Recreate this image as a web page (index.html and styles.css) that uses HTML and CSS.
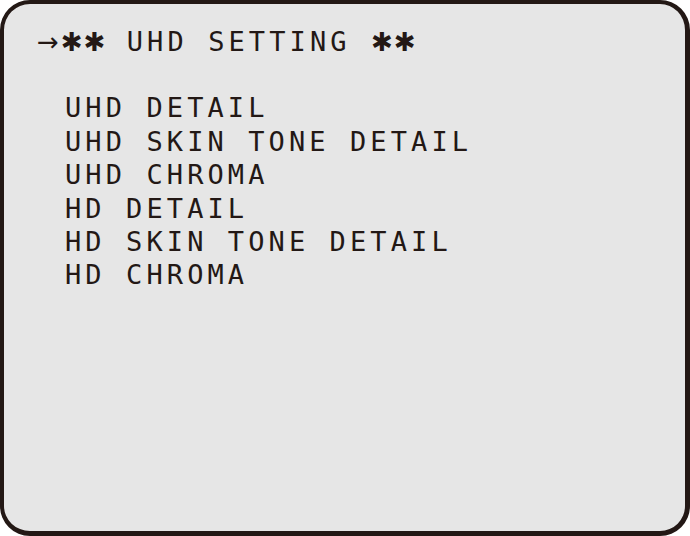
FILE: index.html
```html
<!DOCTYPE html>
<html lang="en">
<head>
  <meta charset="UTF-8" />
  <meta name="viewport" content="width=device-width, initial-scale=1" />
  <title>UHD SETTING</title>
  <link rel="stylesheet" href="styles.css">
</head>
<body>
  <div class="screen">
    <div class="title"><span class="arrow">→</span><span class="star">✱✱</span> UHD SETTING <span class="star">✱✱</span></div>
    <ul class="menu">
      <li>UHD DETAIL</li>
      <li>UHD SKIN TONE DETAIL</li>
      <li>UHD CHROMA</li>
      <li>HD DETAIL</li>
      <li>HD SKIN TONE DETAIL</li>
      <li>HD CHROMA</li>
    </ul>
  </div>
</body>
</html>
```

FILE: styles.css
```css
body {
  margin: 0;
  background-color: #fff;
}
.screen {
  box-sizing: border-box;
  width: 690px;
  height: 536px;
  border: 4px solid #231815;
  border-bottom-width: 5px;
  border-right-width: 5px;
  border-radius: 30px;
  background-color: #e6e6e6;
  color: #231815;
  font-family: "DejaVu Sans Mono", monospace;
  font-size: 27px;
  letter-spacing: 4.1px;
  line-height: 33.4px;
  padding: 21px 0 0 33px;
}
.title {
  white-space: pre;
}
.arrow {
  font-family: "DejaVu Sans", sans-serif;
  font-size: 26px;
  letter-spacing: 2px;
}
.star {
  font-family: "DejaVu Sans", sans-serif;
  font-size: 26px;
  letter-spacing: 1px;
}
.menu {
  list-style: none;
  margin: 32px 0 0 28px;
  padding: 0;
}
.menu li {
  white-space: pre;
}
```
